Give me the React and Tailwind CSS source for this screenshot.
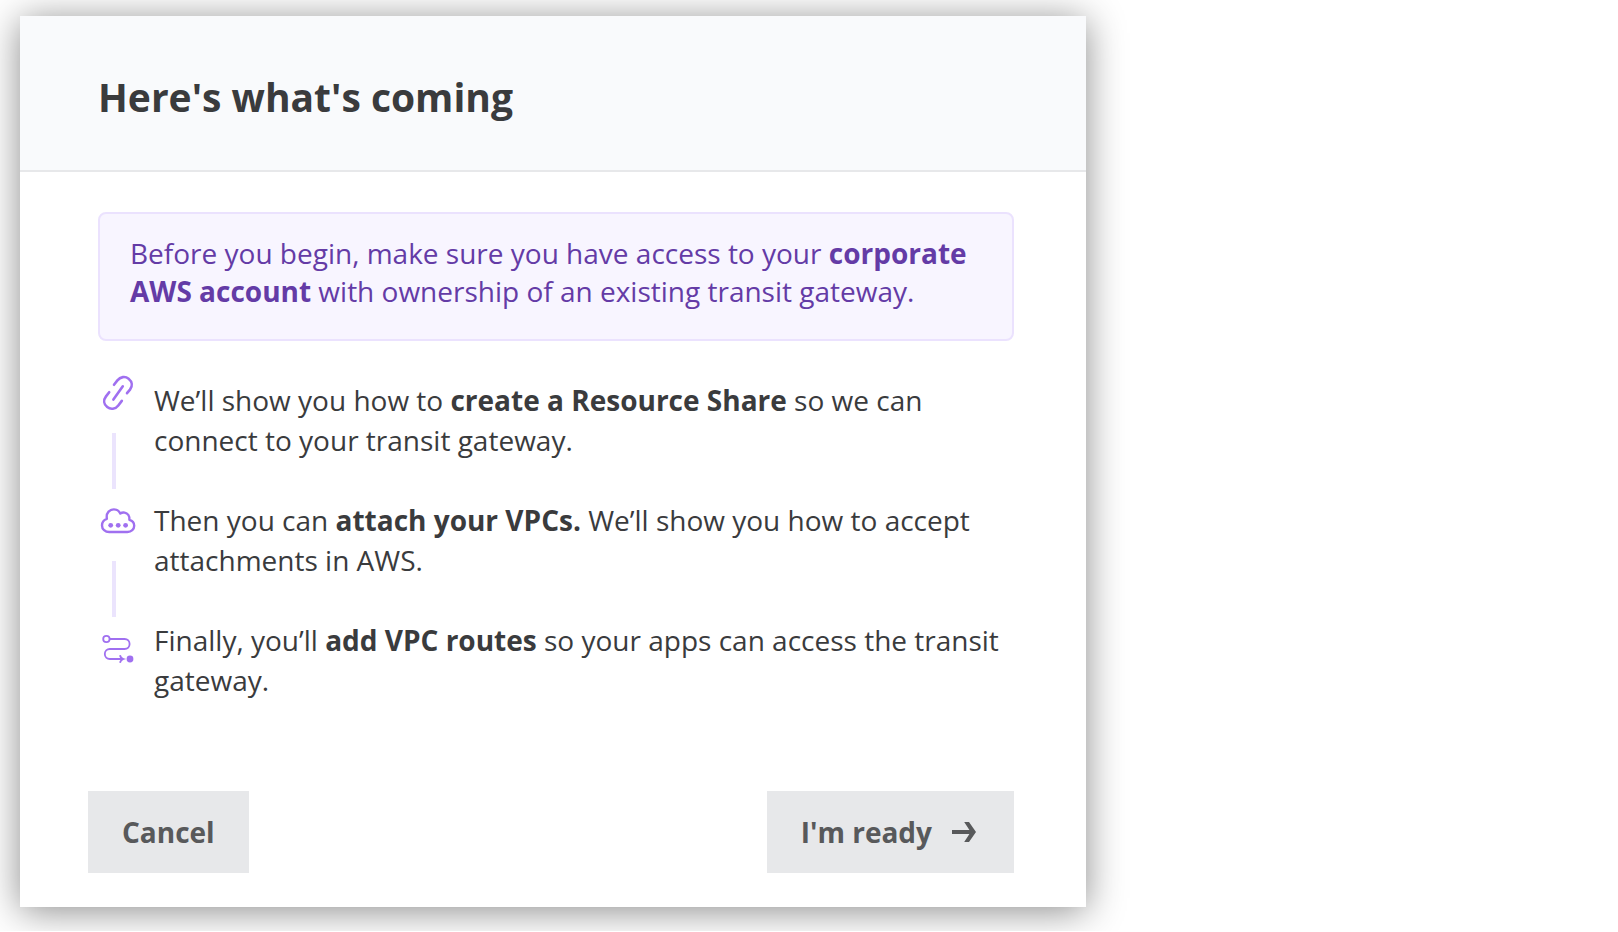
function LinkIcon() {
  return (
    <svg viewBox="0 0 40 40" className="size-10" fill="none" stroke="#a070f0" strokeWidth="2.6" strokeLinecap="round">
      <path d="M16 11.8 L19.4 7.4 C22.4 3.6 27.2 3 30.6 5.7 C34.2 8.6 34.8 13 32 16.6 L29 20.2" />
      <path d="M11.2 19.2 L8 23.4 C5.2 27 5.8 31.4 9.2 34.1 C12.6 36.8 17.4 36.3 20.3 32.5 L23.8 27.9" />
      <path d="M24.8 13.3 L15.4 26.6" />
    </svg>
  );
}

function CloudIcon() {
  return (
    <svg viewBox="0 0 40 40" className="size-10" fill="none" stroke="#a070f0" strokeWidth="2.4" strokeLinejoin="round">
      <path d="M11.2 31 H29.4 C33.4 31 36.2 28.2 36.2 24.8 C36.2 21.8 34.2 19.6 31.4 18.9 C31.8 15 29.6 12.2 26.6 11.6 C25 11.3 23.6 11.6 22.3 12.5 C21 9.8 18.6 8.4 15.9 8.4 C11.6 8.4 8.4 11.8 8.7 16.2 C8.7 16.9 8.8 17.3 8.9 17.8 C5.9 18.8 4 21.4 4 24.4 C4 28.2 7.2 31 11.2 31 Z" />
      <g fill="#a070f0" stroke="none">
        <circle cx="12.7" cy="24.3" r="2.4" />
        <circle cx="20.2" cy="24.3" r="2.4" />
        <circle cx="27.6" cy="24.3" r="2.4" />
      </g>
    </svg>
  );
}

function RouteIcon() {
  return (
    <svg viewBox="0 0 40 40" className="size-10" fill="none" stroke="#a070f0" strokeWidth="1.8">
      <circle cx="8.4" cy="10" r="3.2" />
      <path d="M11.6 10 H26.6 C29.6 10 31.6 12.2 31.6 15 C31.6 17.8 29.6 20 26.6 20 H11.8 C9 20 6.8 22.2 6.8 25 C6.8 27.8 9 30 11.8 30 H24.6" />
      <path d="M22 26.2 C22.4 28.2 23.6 29.4 25.4 30 C23.6 30.6 22.4 31.8 22 33.8" />
      <circle cx="32" cy="30" r="3.4" fill="#a070f0" stroke="none" />
    </svg>
  );
}

function ArrowIcon() {
  return (
    <svg viewBox="0 0 24 20" className="h-5 w-6" fill="#58595b" aria-hidden="true">
      <path d="M0 8 H17.4 L12.2 0 H17 L24 10 L17 20 H12.2 L17.4 12 H0 Z" />
    </svg>
  );
}

function Connector() {
  return <div className="mt-5 mb-3 ml-3.5 h-14 w-1 bg-[#ebe4fd]" />;
}

export default function App() {
  return (
    <div className="bg-white pt-4 pb-6 pl-5 font-['Open_Sans',sans-serif]">
      <main className="w-full max-w-[1066px] bg-white text-[28px] text-[#3a3b3d] shadow-[0_4px_36px_rgba(0,0,0,0.46)]">
        <header className="border-b-2 border-[#e7e8ea] bg-[#f9fafc] px-[78px] pt-[53px] pb-[45px]">
          <h1 className="text-[39px] leading-[56px] font-bold">Here's what's coming</h1>
        </header>

        <section className="pt-10 pr-[72px] pl-[78px]">
          <p className="rounded-lg border-2 border-[#ebe2fe] bg-[#f8f5ff] px-[30px] pt-5 pb-[29px] leading-[38px] text-[#643ba6]">
            Before you begin, make sure you have access to your{" "}
            <strong>corporate AWS account</strong> with ownership of an existing transit gateway.
          </p>

          <div className="mt-8 flex gap-4">
            <div className="w-10 shrink-0" aria-hidden="true">
              <LinkIcon />
              <Connector />
              <CloudIcon />
              <Connector />
              <RouteIcon />
            </div>
            <ol className="flex flex-col gap-10 pt-[7px] leading-10">
              <li>
                We’ll show you how to <strong>create a Resource Share</strong> so we can connect to your transit gateway.
              </li>
              <li>
                Then you can <strong>attach your VPCs.</strong> We’ll show you how to accept attachments in AWS.
              </li>
              <li>
                Finally, you’ll <strong>add VPC routes</strong> so your apps can access the transit gateway.
              </li>
            </ol>
          </div>
        </section>

        <footer className="flex justify-between pt-[91px] pr-[72px] pb-[34px] pl-[68px] leading-[38px] font-bold text-[#58595b]">
          <button type="button" className="bg-[#e7e8ea] px-[34px] py-[22px]">
            Cancel
          </button>
          <button type="button" className="flex items-center gap-5 bg-[#e7e8ea] py-[22px] pr-[38px] pl-[34px]">
            I'm ready
            <ArrowIcon />
          </button>
        </footer>
      </main>
    </div>
  );
}
